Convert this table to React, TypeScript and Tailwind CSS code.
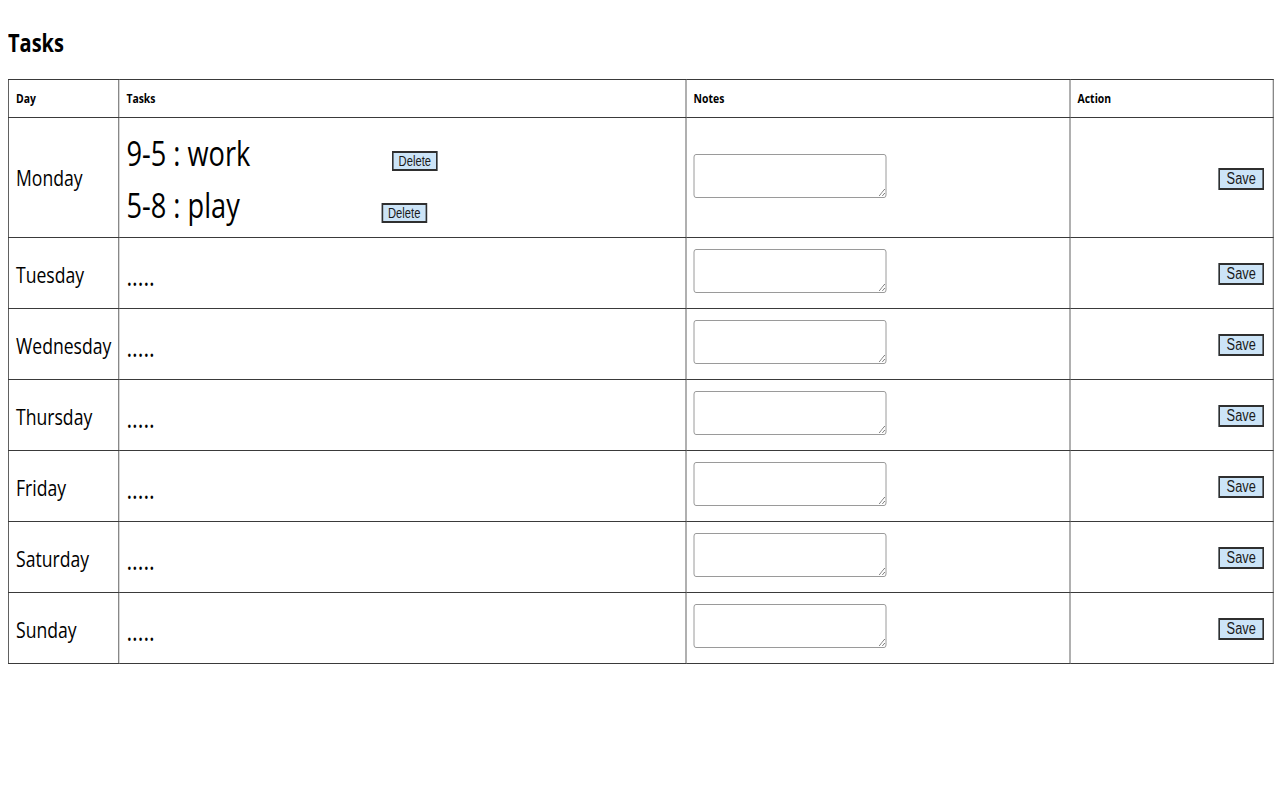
const days = ["Tuesday", "Wednesday", "Thursday", "Friday", "Saturday", "Sunday"];

function NoteBox() {
  return <textarea className="block w-[241px] h-[44px] border border-[#8f8f8f] rounded-[3px] bg-white" />;
}

function DeleteButton() {
  return (
    <button className="w-[57px] h-[20px] border-2 border-[#2f2f2f] bg-[#cce4f7] leading-[14px] text-[14px] text-[#1a1a1a] font-['Liberation_Sans',sans-serif]">
      Delete
    </button>
  );
}

function SaveButton() {
  return (
    <button className="w-[57px] h-[22px] border-2 border-[#2f2f2f] bg-[#cce4f7] leading-[16px] text-[16px] text-[#1a1a1a] font-['Liberation_Sans',sans-serif]">
      Save
    </button>
  );
}

export default function App() {
  return (
    <div className="w-full overflow-hidden bg-white min-h-[800px]">
      <div className="w-[1600px] origin-top-left scale-x-[0.8] font-['Open_Sans',sans-serif] text-black">
        <h1 className="pl-[10px] pt-[24px] text-[25px] font-bold leading-[36px]">Tasks</h1>

        <table className="ml-[10px] mt-[19px] w-[1581px] border-collapse border border-[#3a3a3a] table-fixed">
          <colgroup>
            <col className="w-[138px]" />
            <col className="w-[709px]" />
            <col className="w-[480px]" />
            <col className="w-[254px]" />
          </colgroup>
          <thead>
            <tr className="h-[38px]">
              {["Day", "Tasks", "Notes", "Action"].map((h) => (
                <th key={h} className="border border-[#3a3a3a] px-[9px] pt-[1px] text-left text-[13px] font-bold">
                  {h}
                </th>
              ))}
            </tr>
          </thead>
          <tbody>
            <tr className="h-[120px]">
              <td className="border border-[#3a3a3a] px-[9px] text-[22px]">Monday</td>
              <td className="border border-[#3a3a3a] px-[9px]">
                <div className="flex flex-col gap-[6px] text-[34px] leading-[46px] pt-[2px]">
                  <div className="flex items-baseline">
                    <span>9-5 : work</span>
                    <span className="ml-[177px]">
                      <DeleteButton />
                    </span>
                  </div>
                  <div className="flex items-baseline">
                    <span>5-8 : play</span>
                    <span className="ml-[177px]">
                      <DeleteButton />
                    </span>
                  </div>
                </div>
              </td>
              <td className="border border-[#3a3a3a] px-[9px] pb-[4px]">
                <NoteBox />
              </td>
              <td className="border border-[#3a3a3a] px-[11px] text-right">
                <SaveButton />
              </td>
            </tr>
            {days.map((d) => (
              <tr key={d} className="h-[71px]">
                <td className="border border-[#3a3a3a] px-[9px] text-[22px] pt-[2px]">{d}</td>
                <td className="border border-[#3a3a3a] px-[9px] text-[27px] pt-[6px]">.....</td>
                <td className="border border-[#3a3a3a] px-[9px] pb-[4px]">
                  <NoteBox />
                </td>
                <td className="border border-[#3a3a3a] px-[11px] text-right">
                  <SaveButton />
                </td>
              </tr>
            ))}
          </tbody>
        </table>
      </div>
    </div>
  );
}
